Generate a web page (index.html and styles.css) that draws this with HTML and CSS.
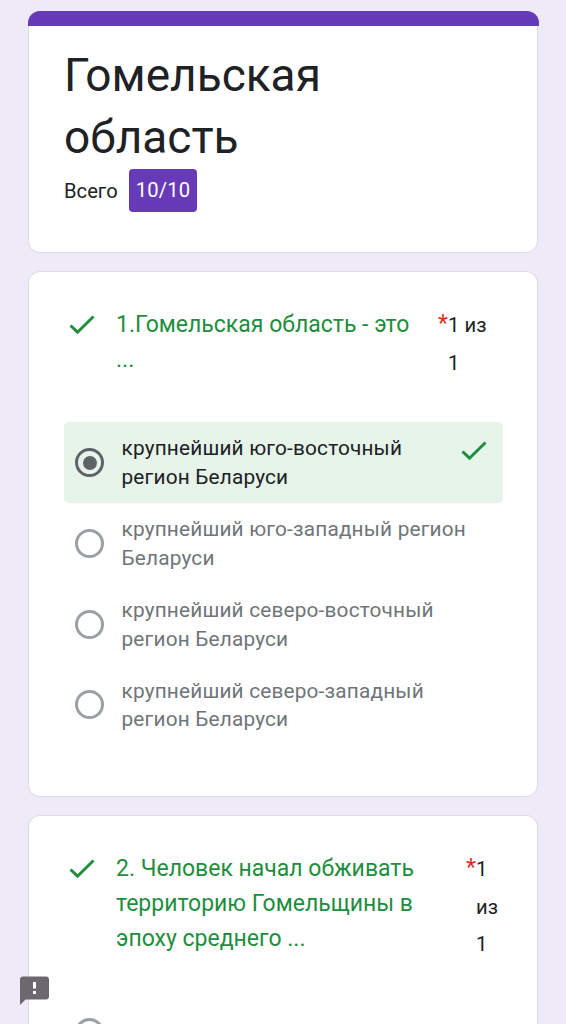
FILE: index.html
```html
<!DOCTYPE html>
<html lang="ru">
<head>
    <meta charset="UTF-8">
    <meta name="viewport" content="width=device-width, initial-scale=1.0">
    <title>Гомельская область</title>
    <link rel="stylesheet" href="styles.css">
</head>
<body>
    <main class="container">
        <header class="card header-card">
            <div class="accent"></div>
            <h1>Гомельская область</h1>
            <div class="total">
                <span>Всего</span>
                <span class="score">10/10</span>
            </div>
        </header>

        <section class="card question">
            <div class="question-header">
                <svg class="check" viewBox="0 0 26 20"><path d="M1.5 10.5 L8.5 17.2 L24.5 1.5"/></svg>
                <h2>1.Гомельская область - это ...</h2>
                <span class="required">*</span>
                <div class="points">1 из 1</div>
            </div>
            <div class="options">
                <div class="option correct">
                    <span class="radio checked"></span>
                    <span class="label">крупнейший юго-восточный регион Беларуси</span>
                    <svg class="check" viewBox="0 0 26 20"><path d="M1.5 10.5 L8.5 17.2 L24.5 1.5"/></svg>
                </div>
                <div class="option">
                    <span class="radio"></span>
                    <span class="label">крупнейший юго-западный регион Беларуси</span>
                </div>
                <div class="option">
                    <span class="radio"></span>
                    <span class="label">крупнейший северо-восточный регион Беларуси</span>
                </div>
                <div class="option">
                    <span class="radio"></span>
                    <span class="label">крупнейший северо-западный регион Беларуси</span>
                </div>
            </div>
        </section>

        <section class="card question">
            <div class="question-header narrow">
                <svg class="check" viewBox="0 0 26 20"><path d="M1.5 10.5 L8.5 17.2 L24.5 1.5"/></svg>
                <h2>2. Человек начал обживать территорию Гомельщины в эпоху среднего ...</h2>
                <span class="required">*</span>
                <div class="points">1 из 1</div>
            </div>
            <div class="options">
                <div class="option">
                    <span class="radio"></span>
                </div>
            </div>
        </section>
    </main>

    <!-- report a problem -->
    <svg class="feedback" viewBox="0 0 29 29">
        <path fill-rule="evenodd" d="M3 0.5 H26 Q29 0.5 29 3.5 V20.5 Q29 23.5 26 23.5 H5.5 L0 29 V3.5 Q0 0.5 3 0.5 Z M13 6 V12.5 H16 V6 Z M13 15 V18 H16 V15 Z"/>
    </svg>
</body>
</html>
```

FILE: styles.css
```css
* {
    box-sizing: border-box;
}
body {
    margin: 0;
    background-color: #eeeaf8;
    color: #202124;
    font-family: Roboto, sans-serif;
    font-size: 20.2px;
}
.container {
    display: flex;
    flex-direction: column;
    gap: 18px;
    height: 1024px;
    overflow: hidden;
    padding: 11px 28px 0;
}
.card {
    background: #ffffff;
    border: 1px solid #dadce0;
    border-radius: 12px;
    padding: 35px 34.5px 0 35px;
}
.header-card {
    height: 242.4px;
    padding-top: 0;
}
.accent {
    height: 14.5px;
    margin: -1px -36px 18.5px;
    background-color: #673ab7;
    border-radius: 12px 12px 0 0;
}
h1 {
    margin: 0;
    font-size: 46px;
    font-weight: 400;
    line-height: 62px;
}
.total {
    display: flex;
    align-items: center;
    gap: 11px;
    margin-top: 1px;
    line-height: 22px;
}
.score {
    padding: 7px;
    line-height: 29px;
    letter-spacing: 0.2px;
    color: #ffffff;
    background-color: #673ab7;
    border-radius: 4px;
}
.question {
    height: 526px;
    flex-shrink: 0;
}
.question-header {
    display: grid;
    grid-template-columns: 52px 322px 10px 55px;
    height: 115px;
}
.question-header.narrow {
    grid-template-columns: 52px 350px 10px 27px;
    height: 141px;
}
.check {
    width: 26px;
    height: 20px;
    fill: none;
    stroke: #1e8e3e;
    stroke-width: 3;
}
.question-header .check {
    margin: 7.5px 0 0 5px;
}
h2 {
    margin: 0;
    padding: 1px 24px 0 0;
    font-size: 23px;
    font-weight: 400;
    line-height: 34.8px;
    color: #1e8e3e;
}
.required {
    font-size: 23px;
    line-height: 34.6px;
    color: #d93025;
}
.points {
    line-height: 37.4px;
    letter-spacing: 0.1px;
}
.option {
    display: flex;
    align-items: center;
    height: 80.8px;
    padding: 0 16px 0 11px;
    border-radius: 5px;
    color: #70757a;
}
.correct {
    color: #202124;
    background-color: #e6f4ea;
}
.radio {
    flex-shrink: 0;
    display: flex;
    align-items: center;
    justify-content: center;
    width: 29px;
    height: 29px;
    margin-right: 17.5px;
    border: 3px solid #9aa0a6;
    border-radius: 50%;
}
.checked {
    border-color: #5f6368;
}
.checked::after {
    content: "";
    width: 14px;
    height: 14px;
    border-radius: 50%;
    background-color: #5f6368;
}
.label {
    flex: 1;
    padding-top: 1px;
    font-size: 20.8px;
    line-height: 28.8px;
    letter-spacing: 0.18px;
}
.option .check {
    align-self: flex-start;
    margin-top: 19px;
}
.feedback {
    position: fixed;
    left: 20px;
    top: 976px;
    width: 29px;
    height: 29px;
    fill: #6b696f;
}
/* the lower part of the list is cut off by the screen */
.question:last-child {
    flex: 0 1 209px;
    min-height: 0;
    height: auto;
    overflow: hidden;
    border-bottom: 0;
    border-radius: 12px 12px 0 0;
}
```
